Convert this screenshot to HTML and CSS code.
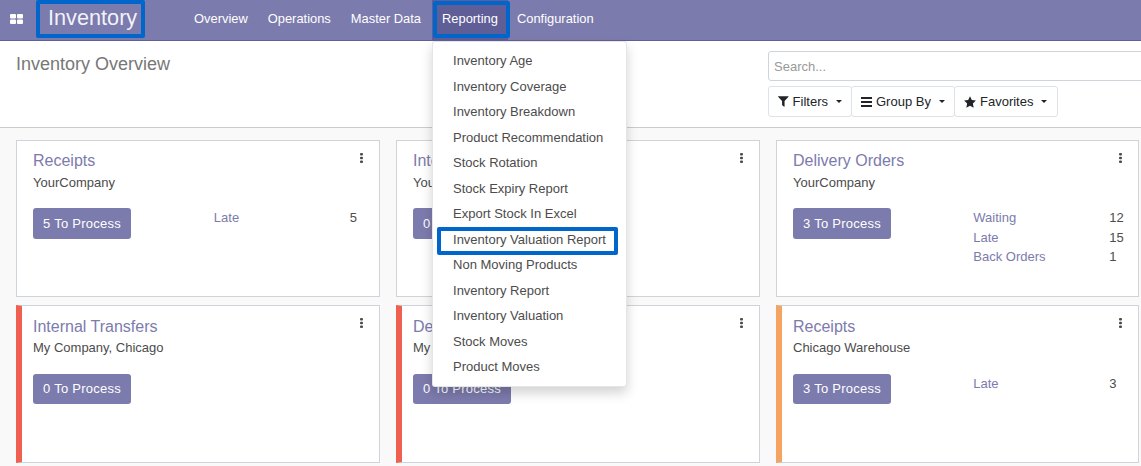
FILE: index.html
```html
<!DOCTYPE html>
<html>
<head>
<title>Inventory Overview</title>
<link rel="stylesheet" href="styles.css">
</head>
<body>

<nav class="navbar">
  <svg class="apps-icon" width="13" height="10" viewBox="0 0 13 10"><rect width="6" height="4.5" rx="1"/><rect x="7" width="6" height="4.5" rx="1"/><rect y="5.5" width="6" height="4.5" rx="1"/><rect x="7" y="5.5" width="6" height="4.5" rx="1"/></svg>
  <a class="brand">Inventory</a>
  <ul class="nav-menu">
    <li><a>Overview</a></li>
    <li><a>Operations</a></li>
    <li><a>Master Data</a></li>
    <li class="open">
      <a>Reporting</a>
      <ul class="dropdown">
        <li>Inventory Age</li>
        <li>Inventory Coverage</li>
        <li>Inventory Breakdown</li>
        <li>Product Recommendation</li>
        <li>Stock Rotation</li>
        <li>Stock Expiry Report</li>
        <li>Export Stock In Excel</li>
        <li class="marked">Inventory Valuation Report</li>
        <li>Non Moving Products</li>
        <li>Inventory Report</li>
        <li>Inventory Valuation</li>
        <li>Stock Moves</li>
        <li>Product Moves</li>
      </ul>
    </li>
    <li><a>Configuration</a></li>
  </ul>
</nav>

<div class="control-panel">
  <h2 class="page-title">Inventory Overview</h2>
  <div class="search-area">
    <input class="search-input" type="text" placeholder="Search...">
    <div class="filter-buttons">
      <button class="filter-btn filters">
        <svg width="11" height="11" viewBox="0 0 11 11"><path d="M0.3 0h10.4c.3 0 .4.3.2.5L6.8 5v5.6c0 .3-.3.4-.5.3L4.4 9.3c-.1-.1-.2-.2-.2-.3V5L.1.5C-.1.3 0 0 .3 0z"/></svg>
        Filters<span class="caret"></span>
      </button>
      <button class="filter-btn group-by">
        <svg width="11" height="10" viewBox="0 0 11 10"><rect width="11" height="2"/><rect y="4" width="11" height="2"/><rect y="8" width="11" height="2"/></svg>
        Group By<span class="caret"></span>
      </button>
      <button class="filter-btn favorites">
        <svg width="12" height="12" viewBox="0 0 24 24"><path d="M12 0.5l3.6 7.6 8.2 1.1-6 5.8 1.5 8.3L12 19.3l-7.3 4 1.5-8.3-6-5.8 8.2-1.1z"/></svg>
        Favorites<span class="caret"></span>
      </button>
    </div>
  </div>
</div>

<div class="dashboard">

  <div class="card">
    <svg class="kebab" width="3" height="10" viewBox="0 0 3 10"><rect width="3" height="2.6" rx="1"/><rect y="3.7" width="3" height="2.6" rx="1"/><rect y="7.4" width="3" height="2.6" rx="1"/></svg>
    <div class="card-title">Receipts</div>
    <div class="card-sub">YourCompany</div>
    <div class="card-body">
      <button class="process-btn">5 To Process</button>
      <div class="stats">
        <div class="stat"><a>Late</a><span>5</span></div>
      </div>
    </div>
  </div>

  <div class="card">
    <svg class="kebab" width="3" height="10" viewBox="0 0 3 10"><rect width="3" height="2.6" rx="1"/><rect y="3.7" width="3" height="2.6" rx="1"/><rect y="7.4" width="3" height="2.6" rx="1"/></svg>
    <div class="card-title">Internal Transfers</div>
    <div class="card-sub">YourCompany</div>
    <div class="card-body">
      <button class="process-btn">0 To Process</button>
    </div>
  </div>

  <div class="card">
    <svg class="kebab" width="3" height="10" viewBox="0 0 3 10"><rect width="3" height="2.6" rx="1"/><rect y="3.7" width="3" height="2.6" rx="1"/><rect y="7.4" width="3" height="2.6" rx="1"/></svg>
    <div class="card-title">Delivery Orders</div>
    <div class="card-sub">YourCompany</div>
    <div class="card-body">
      <button class="process-btn">3 To Process</button>
      <div class="stats">
        <div class="stat"><a>Waiting</a><span>12</span></div>
        <div class="stat"><a>Late</a><span>15</span></div>
        <div class="stat"><a>Back Orders</a><span>1</span></div>
      </div>
    </div>
  </div>

  <div class="card red">
    <svg class="kebab" width="3" height="10" viewBox="0 0 3 10"><rect width="3" height="2.6" rx="1"/><rect y="3.7" width="3" height="2.6" rx="1"/><rect y="7.4" width="3" height="2.6" rx="1"/></svg>
    <div class="card-title">Internal Transfers</div>
    <div class="card-sub">My Company, Chicago</div>
    <div class="card-body">
      <button class="process-btn">0 To Process</button>
    </div>
  </div>

  <div class="card red">
    <svg class="kebab" width="3" height="10" viewBox="0 0 3 10"><rect width="3" height="2.6" rx="1"/><rect y="3.7" width="3" height="2.6" rx="1"/><rect y="7.4" width="3" height="2.6" rx="1"/></svg>
    <div class="card-title">Delivery Orders</div>
    <div class="card-sub">My Company, Chicago</div>
    <div class="card-body">
      <button class="process-btn">0 To Process</button>
    </div>
  </div>

  <div class="card orange">
    <svg class="kebab" width="3" height="10" viewBox="0 0 3 10"><rect width="3" height="2.6" rx="1"/><rect y="3.7" width="3" height="2.6" rx="1"/><rect y="7.4" width="3" height="2.6" rx="1"/></svg>
    <div class="card-title">Receipts</div>
    <div class="card-sub">Chicago Warehouse</div>
    <div class="card-body">
      <button class="process-btn">3 To Process</button>
      <div class="stats">
        <div class="stat"><a>Late</a><span>3</span></div>
      </div>
    </div>
  </div>

</div>

</body>
</html>
```

FILE: styles.css
```css
html, body {
  height: 466px;
  overflow: hidden;
}

body {
  margin: 0;
  font-family: 'Liberation Sans', sans-serif;
  font-size: 13px;
  line-height: 19.5px;
  color: #4c4c4c;
  background-color: #f9f9f9;
}

ul {
  list-style: none;
  margin: 0;
  padding: 0;
}

/* top bar */
.navbar {
  display: flex;
  align-items: center;
  height: 40px;
  background-color: #7c7bad;
  border-bottom: 1px solid #5f5e97;
  color: white;
  position: relative;
  z-index: 5;
}

.apps-icon {
  fill: white;
  margin-left: 10px;
  margin-bottom: 3px;
}

.brand {
  position: relative;
  margin-left: 25px;
  margin-bottom: 4px;
  font-size: 21.7px;
  width: 88px;
  color: rgba(255, 255, 255, 0.92);
}

.brand::after {
  content: "";
  position: absolute;
  top: -8px;
  left: -12px;
  width: 101px;
  height: 30px;
  border: 4px solid #0066cc;
  border-radius: 2px;
}

.nav-menu {
  display: flex;
  margin-left: 48px;
  height: 40px;
  font-size: 12.9px;
}

.nav-menu > li {
  position: relative;
}

.nav-menu > li > a {
  display: block;
  padding: 0 10px;
  line-height: 37px;
  height: 40px;
}

.nav-menu > li.open {
  margin: 0 -1px 0 1px;
}

.nav-menu > li.open > a {
  background-color: #5f5e97;
}

.nav-menu > li.open::after {
  content: "";
  position: absolute;
  top: 1px;
  left: 1px;
  width: 69px;
  height: 29px;
  border: 4px solid #0066cc;
  border-radius: 2px;
}

.dropdown {
  position: absolute;
  top: 41px;
  left: 0;
  width: 195px;
  box-sizing: border-box;
  padding: 6px 0;
  background-color: white;
  color: #4c4c4c;
  border: 1px solid rgba(0, 0, 0, 0.1);
  border-radius: 3px;
  box-shadow: 0 6px 12px rgba(0, 0, 0, 0.175);
  font-size: 13px;
}

.dropdown li {
  position: relative;
  padding: 3px 20px;
  white-space: nowrap;
}

.dropdown li.marked::after {
  content: "";
  position: absolute;
  top: 0;
  left: 4px;
  width: 173px;
  height: 20px;
  border: 4px solid #0066cc;
  border-radius: 2px;
}

/* title and search */
.control-panel {
  display: flex;
  height: 86px;
  background-color: white;
  border-bottom: 1px solid #cccccc;
}

.page-title {
  width: 752px;
  flex-shrink: 0;
  margin: 0;
  padding: 12px 0 0 16px;
  font-size: 18px;
  font-weight: 400;
  line-height: 22px;
  color: #777777;
}

.search-area {
  padding-top: 10px;
  flex-shrink: 0;
}

.search-input {
  display: block;
  width: 500px;
  height: 30px;
  box-sizing: border-box;
  padding: 0 5px;
  border: 1px solid #ced4da;
  border-radius: 3px;
  font-family: inherit;
  font-size: 13px;
}

.search-input::placeholder {
  color: #999999;
}

.filter-buttons {
  display: flex;
  margin-top: 5px;
}

.filter-btn {
  display: flex;
  align-items: center;
  height: 31px;
  box-sizing: border-box;
  padding: 0 9px;
  background-color: white;
  border: 1px solid #dee2e6;
  border-radius: 3px;
  font-family: inherit;
  font-size: 13px;
  color: #212529;
  white-space: nowrap;
}

.filter-btn svg {
  fill: #212529;
  margin-right: 4px;
}

.filters { width: 84px; }
.group-by { width: 104px; margin-left: -1px; }
.favorites { width: 104px; margin-left: -1px; }

.caret {
  width: 0;
  height: 0;
  margin-left: 8px;
  border-top: 3px solid #212529;
  border-left: 3px solid transparent;
  border-right: 3px solid transparent;
}

/* cards */
.dashboard {
  display: grid;
  grid-template-columns: 364px 364px 363px;
  grid-auto-rows: 157.3px;
  gap: 8px 16px;
  padding: 12px 0 0 16px;
}

.card {
  position: relative;
  box-sizing: border-box;
  padding: 9.4px 16px 0 16px;
  background-color: white;
  border: 1px solid #ced4da;
}

.card.red {
  border-left: 6px solid #f06050;
  padding-left: 11px;
}

.card.orange {
  border-left: 6px solid #f4a460;
  padding-left: 11px;
}

.kebab {
  position: absolute;
  top: 12px;
  right: 16px;
  fill: #4c4c4c;
}

.card-title {
  font-size: 16px;
  line-height: 22px;
  color: #7c7bad;
}

.card-sub {
  margin-top: 0.6px;
  line-height: 20px;
}

.card-body {
  display: grid;
  grid-template-columns: 54.8% 1fr;
  margin-top: 15.35px;
}

.process-btn {
  width: 98px;
  height: 30.5px;
  padding: 0 0 0.5px;
  border: none;
  border-radius: 3px;
  background-color: #7c7bad;
  color: white;
  font-family: inherit;
  font-size: 13px;
  letter-spacing: 0.25px;
}

.stat {
  display: grid;
  grid-template-columns: 136px 1fr;
}

.stat a {
  color: #7c7bad;
}
```
